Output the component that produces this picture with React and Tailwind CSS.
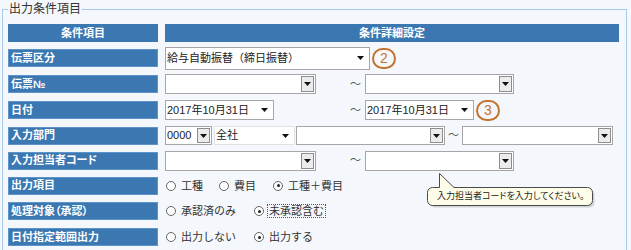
import React from "react";
import clsx from "clsx";

// small black dropdown triangle
const Arrow = () => (
    <svg width="7" height="4" viewBox="0 0 7 4" className="block">
        <path d="M0 0h7L3.5 4z" fill="#111" />
    </svg>
);

const Select = ({ className, text, btn }) => (
    <div className={clsx("flex items-stretch bg-white border border-[#a6a6a6] shrink-0", className)}>
        <span className="flex items-center pl-[1px] text-[11px] text-[#222] whitespace-nowrap">{text}</span>
        {btn ? (
            <div className="ml-auto my-px mr-px w-[13px] bg-[#ececec] border border-[#8e8e8e] flex items-center justify-center">
                <Arrow />
            </div>
        ) : (
            <div className="ml-auto mr-[5px] flex items-center">
                <Arrow />
            </div>
        )}
    </div>
);

const Circle = ({ n }) => (
    <span className="ml-[2px] w-[24px] h-[21px] rounded-full border-2 border-[#c4732f] text-[#c4732f] text-[14px] leading-none flex items-center justify-center shrink-0">
        {n}
    </span>
);

const Tilde = ({ className }) => (
    <span className={clsx("text-[11px] text-[#555] shrink-0", className)}>～</span>
);

const Radio = ({ label, checked, focus, className }) => (
    <div className={clsx("flex items-center shrink-0", className)}>
        <span className="ml-[1px] w-[10px] h-[10px] rounded-full border border-[#666] bg-white flex items-center justify-center">
            {checked && <span className="w-[3px] h-[3px] rounded-full bg-[#222]" />}
        </span>
        <span
            className={clsx(
                "ml-[3px] text-[11px] text-[#333] leading-[12px] px-[1px]",
                focus ? "border border-dotted border-[#555]" : "border border-transparent"
            )}
        >
            {label}
        </span>
    </div>
);

const Row = ({ label, h, children }) => (
    <div className={clsx("flex items-center", h)}>
        <div className="w-[150px] h-[18px] bg-[#3b78b2] border border-[#5c93c8] flex items-center pl-[2px] text-white text-[11px] font-bold shrink-0 [font-feature-settings:'palt']">
            {label}
        </div>
        <div className="ml-[7px] flex items-center">{children}</div>
    </div>
);

export default function App() {
    return (
        <div className="relative w-[631px] h-[250px] overflow-hidden bg-[#f4f8fc] pt-[1px] pl-[2px] font-['Liberation_Sans','Noto_Sans_CJK_JP',sans-serif]">
            <fieldset className="w-[625px] h-[280px] border border-[#a9cbe9] pl-[5px] pt-[7px]">
                <legend className="px-[1px] text-[12px] leading-[16px] text-[#333]">出力条件項目</legend>

                {/* header */}
                <div className="flex h-[18px]">
                    <div className="w-[150px] bg-[#3b78b2] flex items-center justify-center text-white text-[11px] font-bold">
                        条件項目
                    </div>
                    <div className="ml-[7px] w-[454px] bg-[#3b78b2] flex items-center justify-center text-white text-[11px] font-bold">
                        条件詳細設定
                    </div>
                </div>

                <div className="mt-[3px]">
                    <Row label="伝票区分" h="h-[26px]">
                        <Select className="w-[205px] h-[23px]" text="給与自動振替（締日振替）" />
                        <Circle n="2" />
                    </Row>
                    <Row label="伝票№" h="h-[26px]">
                        <Select className="w-[151px] h-[20px]" btn />
                        <Tilde className="w-[49px] text-right pr-[4px]" />
                        <Select className="w-[149px] h-[20px]" btn />
                    </Row>
                    <Row label="日付" h="h-[26px]">
                        <Select className="w-[109px] h-[20px]" text="2017年10月31日" />
                        <Tilde className="w-[91px] text-right pr-[4px]" />
                        <Select className="w-[109px] h-[20px]" text="2017年10月31日" />
                        <Circle n="3" />
                    </Row>
                    <Row label="入力部門" h="h-[25px]">
                        <Select className="w-[47px] h-[19px]" text="0000" btn />
                        <Select className="ml-[2px] w-[81px] h-[19px] border-[#e2e2e2]" text="全社" />
                        <Select className="ml-[1px] w-[149px] h-[19px]" btn />
                        <Tilde className="w-[17px] text-center" />
                        <Select className="w-[151px] h-[19px]" btn />
                    </Row>
                    <Row label="入力担当者コード" h="h-[25px]">
                        <Select className="w-[151px] h-[20px]" btn />
                        <Tilde className="w-[49px] text-right pr-[4px]" />
                        <Select className="w-[149px] h-[20px]" btn />
                    </Row>
                    <Row label="出力項目" h="h-[25px]">
                        <Radio className="w-[53px]" label="工種" />
                        <Radio className="w-[54px]" label="費目" />
                        <Radio label="工種＋費目" checked />
                    </Row>
                    <Row label="処理対象（承認）" h="h-[26px]">
                        <Radio className="w-[88px]" label="承認済のみ" />
                        <Radio label="未承認含む" checked focus />
                    </Row>
                    <Row label="日付指定範囲出力" h="h-[26px]">
                        <Radio className="w-[88px]" label="出力しない" />
                        <Radio label="出力する" checked />
                    </Row>
                </div>
            </fieldset>

            {/* tooltip balloon */}
            <div className="absolute left-[427px] top-[173px] w-[170px] h-[37px]">
                <svg width="170" height="37" viewBox="0 0 170 37" className="absolute left-0 top-0">
                    <path
                        d="M7.5,16.5 H14.5 V2.5 L29,16.5 H162.5 A5,5 0 0 1 167.5,21.5 V29.5 A5,5 0 0 1 162.5,34.5 H7.5 A5,5 0 0 1 2.5,29.5 V21.5 A5,5 0 0 1 7.5,16.5 Z"
                        fill="#000"
                        opacity="0.15"
                    />
                    <path
                        d="M5.5,14.5 H12.5 V0.5 L27,14.5 H160.5 A5,5 0 0 1 165.5,19.5 V27.5 A5,5 0 0 1 160.5,32.5 H5.5 A5,5 0 0 1 0.5,27.5 V19.5 A5,5 0 0 1 5.5,14.5 Z"
                        fill="#fdfde9"
                        stroke="#4a4a4a"
                    />
                </svg>
                <span className="absolute left-[10px] top-[16px] text-[9px] leading-[15px] text-[#222] whitespace-nowrap [font-feature-settings:'palt']">
                    入力担当者コードを入力してください。
                </span>
            </div>
        </div>
    );
}
